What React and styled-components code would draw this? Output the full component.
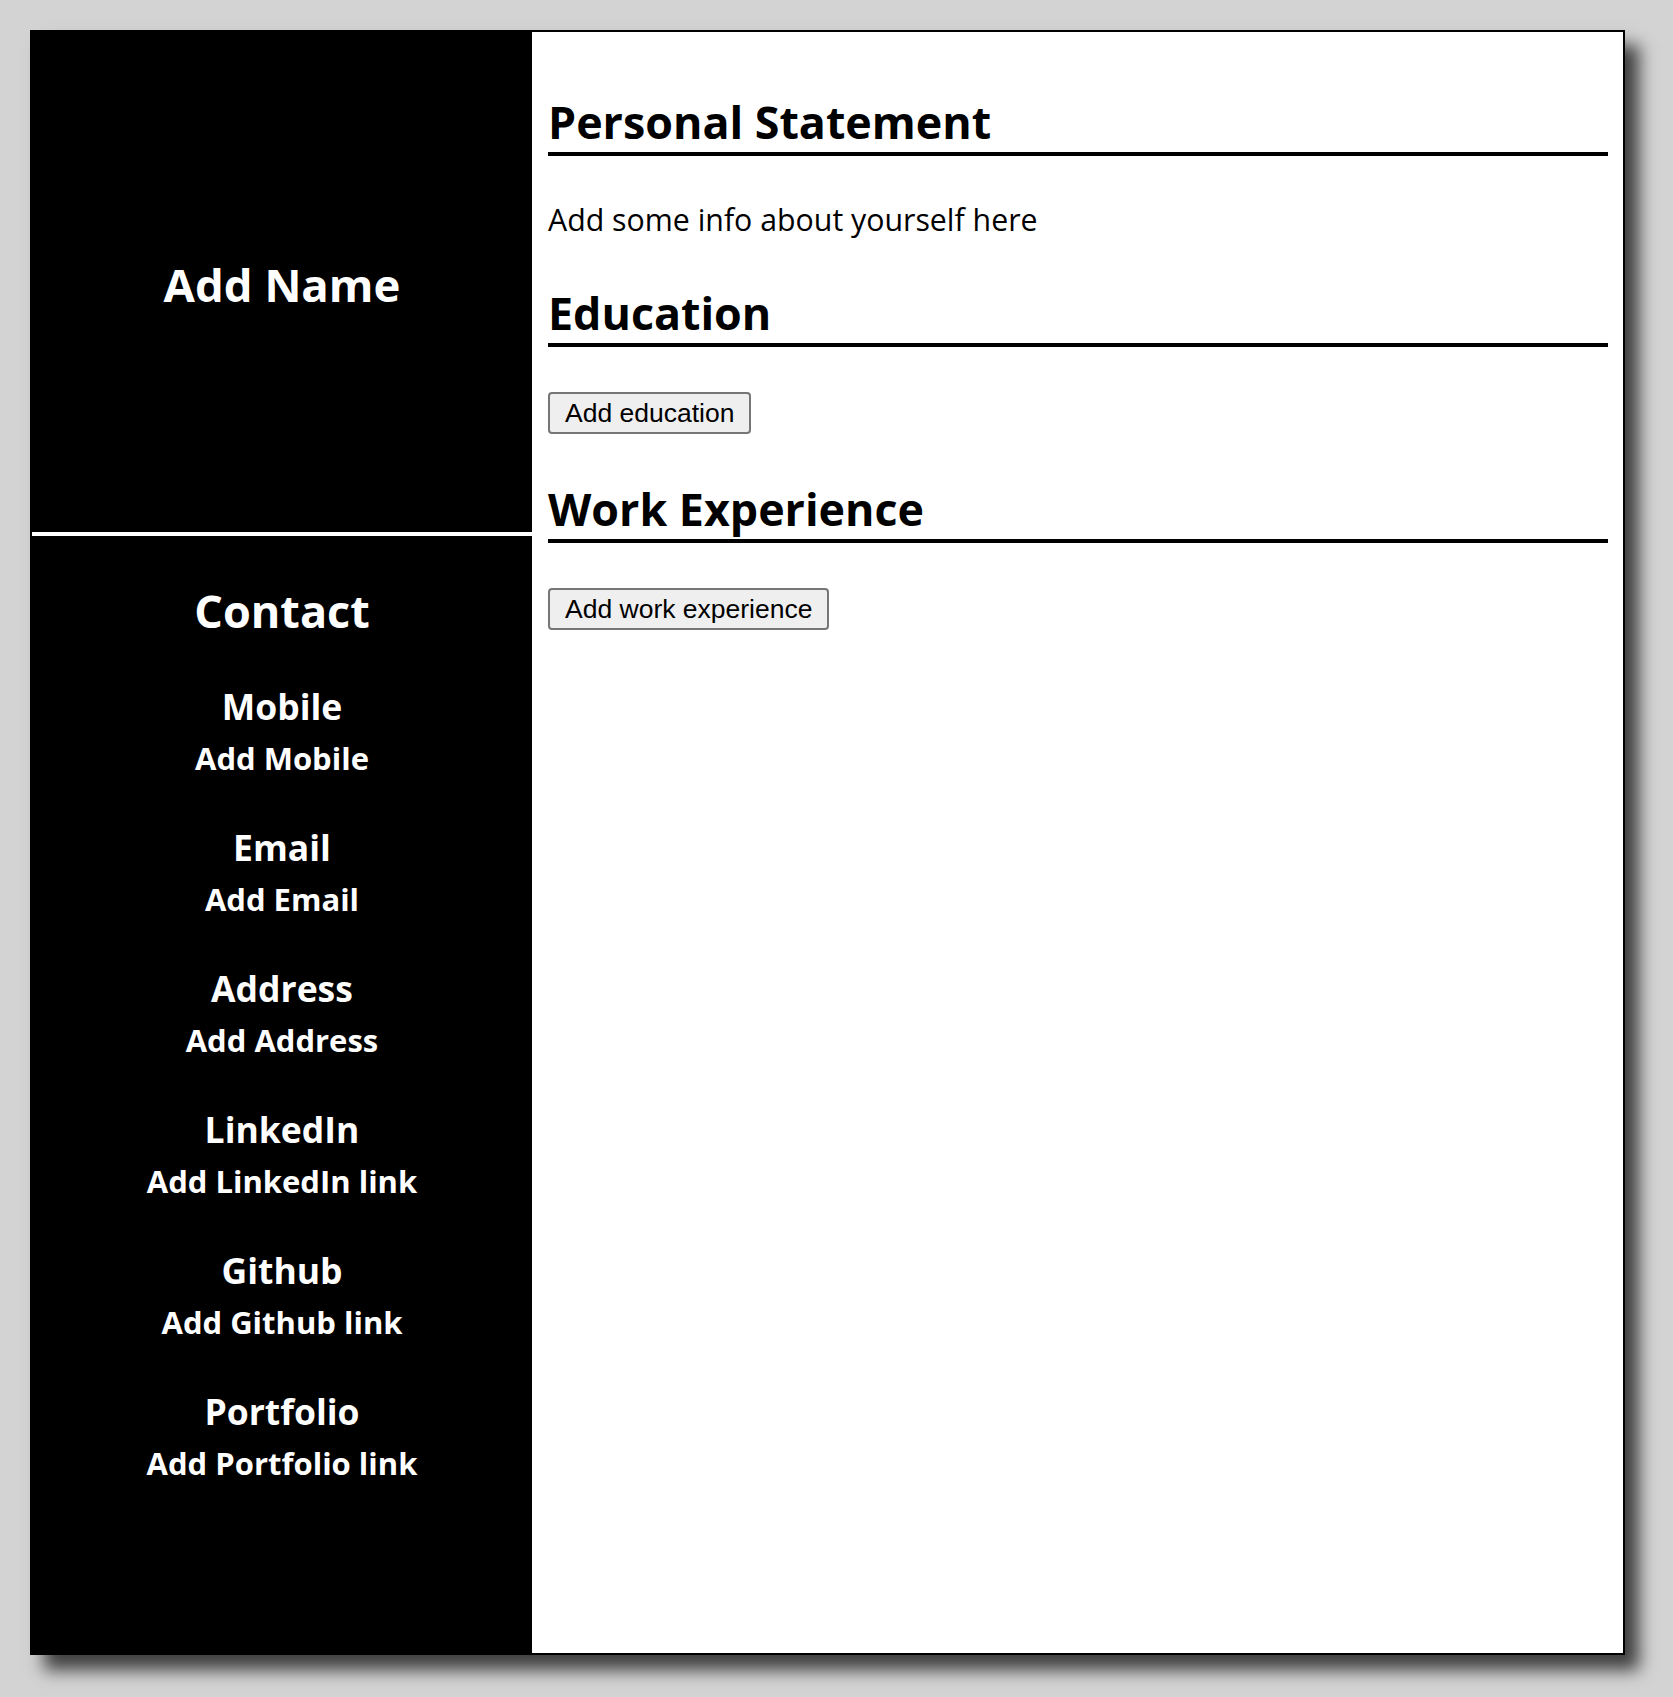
import styled, { createGlobalStyle } from 'styled-components';

const GlobalStyle = createGlobalStyle`
  body {
    margin: 0;
    background: #d3d3d3;
    font-family: "Open Sans", "Noto Sans", sans-serif;
  }
`;

const Page = styled.div`
  padding: 30px 48px 42px 30px;
`;

const Sheet = styled.div`
  box-sizing: border-box;
  width: 1595px;
  height: 1625px;
  display: grid;
  grid-template-columns: 500px 1fr;

  background: #ffffff;
  border: 2px solid #000000;
  box-shadow: 14px 15px 16px rgba(0, 0, 0, 0.7);
`;

const Sidebar = styled.aside`
  background: #000000;
  color: #ffffff;
  text-align: center;
`;

const NameBlock = styled.div`
  box-sizing: border-box;
  height: 504px;
  padding-top: 4px;
  display: flex;
  align-items: center;
  justify-content: center;
  border-bottom: 4px solid #ffffff;
`;

const NameTitle = styled.h1`
  margin: 0;
  font-size: 45.5px;
  line-height: 56px;
  font-weight: 700;
`;

const Contact = styled.div`
  padding-top: 47px;
`;

const ContactTitle = styled.h2`
  margin: 0 0 45px;
  font-size: 45px;
  line-height: 56px;
  font-weight: 700;
`;

const ContactItem = styled.div`
  margin-bottom: 49px;
`;

const ContactLabel = styled.h3`
  margin: 0 0 12px;
  font-size: 35.5px;
  line-height: 44px;
  font-weight: 700;
`;

const ContactValue = styled.p`
  margin: 0;
  font-size: 31px;
  line-height: 36px;
  font-weight: 700;
`;

const Main = styled.main`
  padding: 62px 15px 0 16px;
  display: flex;
  flex-direction: column;
  align-items: flex-start;
  gap: 47px;
`;

const Section = styled.section`
  align-self: stretch;
  display: flex;
  flex-direction: column;
  align-items: flex-start;
`;

const SectionHeading = styled.h2`
  align-self: stretch;
  margin: 0 0 46px;
  padding-bottom: 2px;
  border-bottom: 4px solid #000000;
  font-size: 44.8px;
  line-height: 56px;
  font-weight: 700;
  color: #000000;
`;

const Statement = styled.p`
  margin: 0;
  font-size: 30.3px;
  line-height: 36px;
  color: #000000;
`;

const AddButton = styled.button`
  margin-top: -1px;
  padding: 4px 15px 3px;
  font-family: "Liberation Sans", Arial, sans-serif;
  font-size: 26.5px;
  line-height: 31px;
  color: #000000;
  background: #efefef;
  border: 2px solid #767676;
  border-radius: 4px;
`;

const contacts = [
  ['Mobile', 'Add Mobile'],
  ['Email', 'Add Email'],
  ['Address', 'Add Address'],
  ['LinkedIn', 'Add LinkedIn link'],
  ['Github', 'Add Github link'],
  ['Portfolio', 'Add Portfolio link'],
];

export default function App() {
  return (
    <Page>
      <GlobalStyle />
      <Sheet>
        <Sidebar>
          <NameBlock>
            <NameTitle>Add Name</NameTitle>
          </NameBlock>
          <Contact>
            <ContactTitle>Contact</ContactTitle>
            {contacts.map(([label, value]) => (
              <ContactItem key={label}>
                <ContactLabel>{label}</ContactLabel>
                <ContactValue>{value}</ContactValue>
              </ContactItem>
            ))}
          </Contact>
        </Sidebar>
        <Main>
          <Section>
            <SectionHeading>Personal Statement</SectionHeading>
            <Statement>Add some info about yourself here</Statement>
          </Section>
          <Section>
            <SectionHeading>Education</SectionHeading>
            <AddButton>Add education</AddButton>
          </Section>
          <Section>
            <SectionHeading>Work Experience</SectionHeading>
            <AddButton>Add work experience</AddButton>
          </Section>
        </Main>
      </Sheet>
    </Page>
  );
}
